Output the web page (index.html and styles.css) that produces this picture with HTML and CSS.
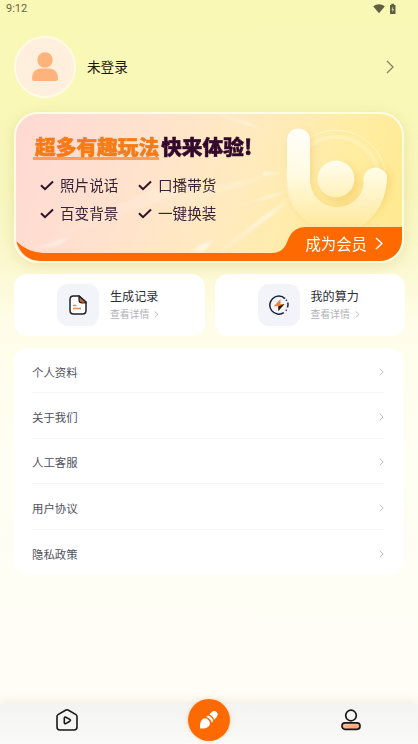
FILE: index.html
```html
<!DOCTYPE html>
<html lang="zh-CN">
<head>
<meta charset="utf-8">
<meta name="viewport" content="width=device-width, initial-scale=1">
<title>我的</title>
<link rel="stylesheet" href="styles.css">
</head>
<body>
<div class="app">
  <header class="status">
    <span>9:12</span>
    <svg width="26" height="12" viewBox="0 0 26 12" fill="#5f5f43">
      <path d="M0.3 3.4C3.5.5 8.500.5 11.700 3.400L6 10.200Z"/>
      <path d="M17 2h1.300V.8h2.800V2h1.400v9h-5.500z"/>
      <path d="M19.800 3.600 18.500 6.800h1v2.400L21 6h-1.200z" fill="#e5e4a8"/>
    </svg>
  </header>

  <section class="profile">
    <div class="avatar">
      <svg width="26" height="30" viewBox="0 0 26 30" fill="#ffb37c">
        <circle cx="13" cy="8" r="7.700"/>
        <path d="M0 26.500C0 20 4 16.500 9 16.500h8c5 0 9 3.500 9 10q0 2.500-2.500 2.500h-21Q0 29 0 26.500Z"/>
      </svg>
    </div>
    <span class="name">未登录</span>
    <svg class="go" width="8" height="14" viewBox="0 0 8 14"><path d="M1 1l6 6-6 6"/></svg>
  </section>

  <section class="banner">
    <svg class="art" width="386" height="147" viewBox="16 114 386 147">
      <defs>
        <linearGradient id="stem" x1="0" y1="0" x2="0" y2="1">
          <stop offset="0" stop-color="#fffefa"/><stop offset=".45" stop-color="#fffbe2"/><stop offset="1" stop-color="#ffe795"/>
        </linearGradient>
        <linearGradient id="ball" x1="0" y1="0" x2="0" y2="1">
          <stop offset="0" stop-color="#fffdf1"/><stop offset="1" stop-color="#fff1b8"/>
        </linearGradient>
        <linearGradient id="ray" x1="0" y1="0" x2="1" y2="0">
          <stop offset="0" stop-color="#fff" stop-opacity="0"/><stop offset=".7" stop-color="#fff" stop-opacity=".65"/><stop offset="1" stop-color="#fff" stop-opacity="0"/>
        </linearGradient>
        <filter id="soft" x="-30%" y="-30%" width="160%" height="160%"><feGaussianBlur stdDeviation="4"/></filter>
        <filter id="haze" x="-30%" y="-80%" width="160%" height="260%"><feGaussianBlur stdDeviation="1"/></filter>
      </defs>
      <g fill="url(#ray)" filter="url(#haze)">
        <path d="M16 252 150 190 230 176 140 208Z" opacity=".3"/>
        <path d="M120 210 290 168 291 172 180 206Z" opacity=".25"/>
        <path d="M215 252 292 195 288 203 224 252Z" opacity=".8"/>
        <path d="M225 182h16v2h-16zM263 172h17v3h-17z"/>
        <path d="M228 208 286 190 284 195Z" opacity=".7"/>
        <path d="M222 114 262 127 260 129 212 114Z" opacity=".7"/>
        <path d="M20 252 75 235 60 245Z" opacity=".7"/>
        <path d="M185 252 215 239 203 252Z"/>
      </g>
      <g fill="none" stroke="#fffbe0">
        <circle cx="336" cy="180" r="50" opacity=".65"/>
        <circle cx="336" cy="180" r="43" opacity=".3" stroke-width="4"/>
      </g>
      <g fill="none" stroke="#efbd50" stroke-width="22" stroke-linecap="round" opacity=".45" filter="url(#soft)">
        <path d="M301 144V180C301 203 316 219 337 219S379 201 379 179"/>
        <circle cx="340" cy="184" r="8"/>
      </g>
      <path fill="url(#stem)" d="M287 140a11.500 11.500 0 0 1 23 0v39c0 16 12 28 27 28s25-10 27-24a11.500 11.500 0 0 1 23-7c0 30-19 56-49 56s-51-23-51-54Z"/>
      <circle cx="336" cy="179" r="18.500" fill="url(#ball)"/>
      <path fill="#ff6a00" d="M16 241q11 11 27 12H272q10 0 14-8.500l3-7q5-10.500 16-10.500h97v34H40Q22 260 16 241Z"/>
    </svg>
    <h1 class="headline"><span class="hot">超多有趣玩法</span><span class="try">快来体验!</span></h1>
    <ul class="features">
      <li><svg width="14" height="11" viewBox="0 0 14 11"><path d="M1 5.200 5 9.200 13 1.500"/></svg>照片说话</li>
      <li><svg width="14" height="11" viewBox="0 0 14 11"><path d="M1 5.200 5 9.200 13 1.500"/></svg>口播带货</li>
      <li><svg width="14" height="11" viewBox="0 0 14 11"><path d="M1 5.200 5 9.200 13 1.500"/></svg>百变背景</li>
      <li><svg width="14" height="11" viewBox="0 0 14 11"><path d="M1 5.200 5 9.200 13 1.500"/></svg>一键换装</li>
    </ul>
    <div class="join">成为会员<svg width="8" height="13" viewBox="0 0 8 13"><path d="M1 1l6 5.500-6 5.500"/></svg></div>
  </section>

  <section class="cards">
    <div class="card">
      <div class="tile">
        <svg width="18" height="20" viewBox="0 0 18 20">
          <path d="M4.500 1H10l7 6v8.500Q17 19 13.500 19h-9Q1 19 1 15.500v-11Q1 1 4.500 1Z" fill="#fff" stroke="#20202a" stroke-width="1.500"/>
          <path d="M10 1l7 6v1h-4q-3 0-3-3Z" fill="#b86332" stroke="#20202a" stroke-width="1.200"/>
          <path d="M4 10.500h3.500M4 13.500h8" stroke="#e58b4c" stroke-width="1.300"/>
        </svg>
      </div>
      <div class="info"><b>生成记录</b><small>查看详情<svg width="5" height="7" viewBox="0 0 5 7"><path d="M.7.5l3.300 3-3.300 3"/></svg></small></div>
    </div>
    <div class="card">
      <div class="tile">
        <svg width="20" height="20" viewBox="0 0 20 20">
          <path d="M16 3.600A9 9 0 1 0 14.800 17.600M17.100 4.800l.7 1M18.800 7.500q.5 3-.4 5M17.600 14.800l-.8.900" fill="none" stroke="#17243a" stroke-width="1.500"/>
          <path d="M11.500 4.200 4.800 11.200h4.500v4.700l6.200-7H11.500Z" fill="#e7853d"/>
          <path d="M9.300 11.200 15.500 8.900 9.300 15.900Z" fill="#27170f"/>
        </svg>
      </div>
      <div class="info"><b>我的算力</b><small>查看详情<svg width="5" height="7" viewBox="0 0 5 7"><path d="M.7.5l3.300 3-3.300 3"/></svg></small></div>
    </div>
  </section>

  <ul class="menu">
    <li>个人资料<svg width="5" height="8" viewBox="0 0 5 8"><path d="M.7.7 4.200 4 .7 7.300"/></svg></li>
    <li>关于我们<svg width="5" height="8" viewBox="0 0 5 8"><path d="M.7.7 4.200 4 .7 7.300"/></svg></li>
    <li>人工客服<svg width="5" height="8" viewBox="0 0 5 8"><path d="M.7.7 4.200 4 .7 7.300"/></svg></li>
    <li>用户协议<svg width="5" height="8" viewBox="0 0 5 8"><path d="M.7.7 4.200 4 .7 7.300"/></svg></li>
    <li>隐私政策<svg width="5" height="8" viewBox="0 0 5 8"><path d="M.7.7 4.200 4 .7 7.300"/></svg></li>
  </ul>

  <nav class="tabs">
    <svg width="22" height="22" viewBox="0 0 22 22" fill="none" stroke="#191919" stroke-width="1.600" stroke-linejoin="round">
      <path d="M2 5.600 9.500 1.200q1.500-.8 3 0L20 5.600q1 .7 1 2V18q0 3-3 3H4q-3 0-3-3V7.600q0-1.300 1-2Z"/>
      <path d="M8.300 9.200q0-1.500 1.500-1l4 2.200q1.300.9 0 1.800l-4 2.400q-1.500.6-1.500-1Z"/>
    </svg>
    <div class="create">
      <svg width="20" height="20" viewBox="0 0 22 22" fill="#fff">
        <path d="M1.200 20.300C.8 15 2 10.500 5.600 9.200c3.200-1 7.500 3.400 6.200 6.900-1.400 3.400-5.600 4.400-10.600 4.200Z"/>
        <path d="M8 7.600l2-1.600q4.500 1.200 5.600 6L14 14Q13 9.200 8 7.600Z"/>
        <path d="M11.200 4.900 14 2.200q3-2.200 5.300 0t.2 5.500l-2.900 3Q15.500 6.300 11.200 4.900Z"/>
      </svg>
    </div>
    <svg width="20" height="22" viewBox="0 0 20 22" stroke="#191919" stroke-width="1.700">
      <defs><linearGradient id="body" x1="0" x2="1" y1="0" y2="1"><stop stop-color="#ffc7a5"/><stop offset="1" stop-color="#ff9a63"/></linearGradient></defs>
      <circle cx="10" cy="6.500" r="5.300" fill="none"/>
      <rect x="1" y="13.800" width="18" height="6.500" rx="3" fill="url(#body)"/>
    </svg>
  </nav>
</div>
</body>
</html>
```
FILE: styles.css
```css
* {
  box-sizing: border-box;
}

body {
  margin: 0;
  font-family: "Noto Sans CJK SC", sans-serif;
}

ul,
h1 {
  margin: 0;
  padding: 0;
  list-style: none;
}

svg {
  display: block;
  flex: none;
}

.app {
  display: flex;
  flex-direction: column;
  height: 744px;
  overflow: hidden;
  background: linear-gradient(#f9f8b5 0, #f9f8b7 100px, #f8f6bd 190px, #fbf8cf 260px, #fffde9 325px, #fffef2 450px, #fffdf7 744px);
}

.status {
  display: flex;
  align-items: center;
  justify-content: space-between;
  height: 18px;
  padding: 0 19px 0 6px;
  font: 11px/20px Roboto, sans-serif;
  color: #66653f;
}

.profile {
  display: flex;
  align-items: center;
  margin: 18px 24px 0 14px;
}

.avatar {
  display: flex;
  align-items: center;
  justify-content: center;
  width: 62px;
  height: 62px;
  border: 2px solid #fffbe6;
  border-radius: 50%;
  background: #ffefdc;
}

.name {
  margin: 0 0 3px 11px;
  font-size: 13.6px;
  line-height: 20px;
  color: #17170c;
}

.go {
  margin-left: auto;
  fill: none;
  stroke: #85845f;
  stroke-width: 1.3;
}

.banner {
  position: relative;
  height: 151px;
  margin: 14px 14px 0;
  border: 2px solid #fffce6;
  border-radius: 24px;
  overflow: hidden;
  background: linear-gradient(110deg, #ffd9d4 0%, #ffe2ce 30%, #ffeabf 55%, #ffeda3 78%, #ffe98e 100%);
  box-shadow: 0 3px 14px rgba(205, 182, 96, .3);
}

.art {
  position: absolute;
  inset: 0;
}

.headline {
  position: relative;
  display: flex;
  width: max-content;
  margin: 19px 0 0 17px;
  font-size: 20.7px;
  line-height: 26px;
  font-weight: 900;
}

.hot {
  padding: 0 0 1px 2px;
  color: #f57b16;
  -webkit-text-stroke: .5px #f57b16;
  background: linear-gradient(#ff9f5a, #ff9f5a) 0 24px / 100% 3px no-repeat;
}

.try {
  margin-left: 2px;
  color: #32082c;
  -webkit-text-stroke: .5px #32082c;
}

.features {
  position: relative;
  display: grid;
  grid-template-columns: 98px 98px;
  grid-auto-rows: 28px;
  margin: 11px 0 0 24px;
  font-size: 14.6px;
  line-height: 28px;
  color: #372336;
}

.features li {
  display: flex;
  align-items: center;
  gap: 6px;
  white-space: nowrap;
}

.features path {
  fill: none;
  stroke: #2d1029;
  stroke-width: 2;
}

.join {
  position: absolute;
  right: 19px;
  bottom: 6px;
  display: flex;
  align-items: center;
  gap: 8px;
  font-size: 15.4px;
  line-height: 24px;
  color: #fff;
}

.join path {
  fill: none;
  stroke: #fff;
  stroke-width: 1.5;
}

.cards {
  display: grid;
  grid-template-columns: 1fr 1fr;
  gap: 10px;
  margin: 11px 13px 0 14px;
}

.card {
  display: flex;
  align-items: center;
  gap: 11px;
  height: 62px;
  padding-left: 43px;
  border-radius: 13px;
  background: #fff;
}

.tile {
  display: flex;
  align-items: center;
  justify-content: center;
  width: 42px;
  height: 42px;
  border-radius: 11px;
  background: #f2f4f9;
}

.info b {
  display: block;
  font-size: 12.1px;
  line-height: 19px;
  font-weight: 400;
  color: #2a2b37;
}

.info small {
  display: flex;
  align-items: center;
  gap: 5px;
  font-size: 9.8px;
  line-height: 19px;
  color: #b0b1b6;
}

.info path,
.menu path {
  fill: none;
  stroke: #b4b5ba;
  stroke-width: .9;
}

.menu {
  height: 227px;
  margin: 12px 14px 0;
  padding: 0 20px 0 18px;
  border-radius: 14px;
  background: #fff;
}

.menu li {
  display: flex;
  align-items: center;
  justify-content: space-between;
  height: 45.4px;
  padding-top: 3px;
  border-bottom: 1px solid #f7f7f8;
  font-size: 11.4px;
  color: #50525d;
}

.menu li:last-child {
  border-bottom: 0;
}

.tabs {
  display: flex;
  align-items: center;
  justify-content: space-between;
  height: 40px;
  margin-top: auto;
  padding: 0 57px 8px 56px;
  background: linear-gradient(#f4f4f3, #f7f7f6 70%, #fbfbf8);
  box-shadow: 0 -2px 10px rgba(160, 145, 100, .16);
}

.create {
  display: flex;
  align-items: center;
  justify-content: center;
  width: 42px;
  height: 42px;
  margin-right: 2px;
  border-radius: 50%;
  background: #ff6a00;
  box-shadow: 0 0 5px rgba(255, 175, 100, .35);
}
```
